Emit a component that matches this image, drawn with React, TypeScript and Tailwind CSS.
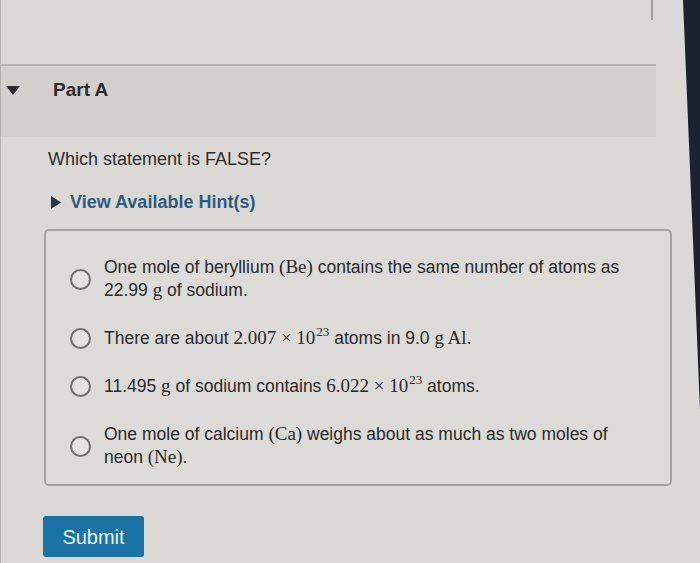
import React from "react";

const sans = { fontFamily: '"Liberation Sans", Arial, sans-serif' };
const serif = { fontFamily: '"Liberation Serif", "Times New Roman", serif' };

function M({ children }: { children: React.ReactNode }) {
  return (
    <span style={serif} className="text-[19px] leading-none">
      {children}
    </span>
  );
}

function Pow() {
  return (
    <>
      <M>10</M>
      <sup style={serif} className="text-[13px] leading-none -top-[8px] ml-[1px]">23</sup>
    </>
  );
}

function Radio() {
  return <span className="block shrink-0 w-[21px] h-[21px] rounded-full border-2 border-[#6f6f6f] bg-[#e4e3e0]" />;
}

const options: React.ReactNode[] = [
  <>
    One mole of beryllium <M>(Be)</M> contains the same number of atoms as 22.99 <M>g</M> of sodium.
  </>,
  <>
    There are about <M>2.007 × </M>
    <Pow /> atoms in 9.0 <M>g Al</M>.
  </>,
  <>
    11.495 <M>g</M> of sodium contains <M>6.022 × </M>
    <Pow /> atoms.
  </>,
  <>
    One mole of calcium <M>(Ca)</M> weighs about as much as two moles of neon <M>(Ne)</M>.
  </>,
];

export default function App() {
  return (
    <div style={sans} className="relative w-[700px] h-[563px] overflow-hidden bg-[#dad9d6] text-[#2a2a2a] border-l border-[#b0b0ae]">
      {/* top of the previous panel */}
      <div className="h-[64px] w-[655px] relative">
        <div className="absolute left-[650px] top-0 w-[2px] h-[20px] bg-[#9c9c9a]" />
      </div>
      <div className="w-[655px] border-t-2 border-[#b5b4b1]" />

      {/* Part A header */}
      <div className="w-[655px] h-[71px] bg-[#d1d0cd] flex items-start pt-[12px]">
        <svg width="14" height="10" viewBox="0 0 14 10" className="ml-[5px] mt-[8px]">
          <polygon points="0,0 14,0 7,9" fill="#2b2d33" />
        </svg>
        <span className="ml-[33px] text-[19px] leading-[24px] font-bold text-[#2a2a2e]">Part A</span>
      </div>

      <div className="pl-[47px] pt-[11px]">
        <p className="text-[18px] leading-[22px] text-[#2e2e2e]">Which statement is FALSE?</p>

        <div className="flex items-center mt-[21px] h-[22px]">
          <svg width="10" height="13" viewBox="0 0 10 13" className="ml-[3px]">
            <polygon points="0,0 10,6.5 0,13" fill="#24384d" />
          </svg>
          <span className="ml-[9px] text-[18px] font-bold text-[#2d5c80]">View Available Hint(s)</span>
        </div>

        <div className="mt-[16px] ml-[-4px] w-[628px] border-2 border-[#a3a3a1] rounded-[5px] bg-[#dcdbd8] pt-[25px] pb-[15px] pr-[20px] flex flex-col gap-[25px]">
          {options.map((o, i) => (
            <div key={i} className="flex items-center">
              <span className="ml-[24px]">
                <Radio />
              </span>
              <p className="ml-[13px] w-[525px] text-[17.5px] leading-[23px] text-[#2a2a2a]">{o}</p>
            </div>
          ))}
        </div>

        <button className="mt-[30px] ml-[-5px] w-[101px] h-[41px] rounded-[3px] bg-[#1a73a5] text-[#e6f3fa] text-[20px] flex items-center justify-center">
          Submit
        </button>
      </div>

      {/* screen bezel in the photo */}
      <svg className="absolute top-0 right-0" width="18" height="563" viewBox="0 0 18 563">
        <polygon points="1,0 18,0 18,410" fill="#1d2231" />
      </svg>
    </div>
  );
}
